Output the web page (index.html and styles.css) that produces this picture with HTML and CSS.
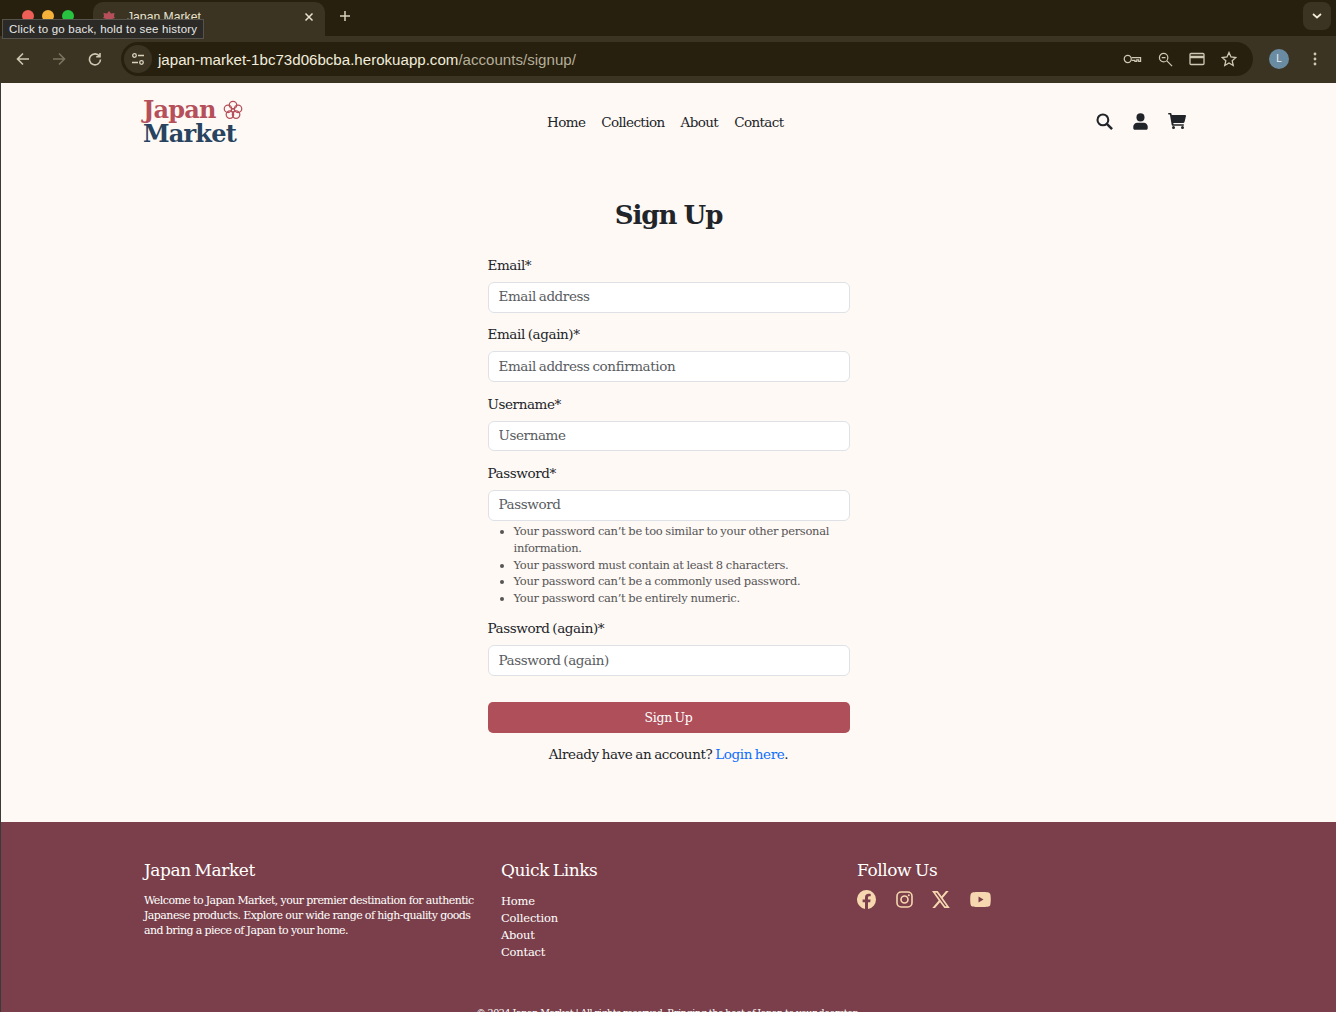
FILE: index.html
```html
<!DOCTYPE html>
<html>
<head>
  <title>Japan Market</title>
  <link rel="stylesheet" href="styles.css">
</head>
<body>
  <div class="browser">
    <div class="tabstrip">
      <div class="lights">
        <span class="light red"></span>
        <span class="light yellow"></span>
        <span class="light green"></span>
      </div>
      <div class="tab">
        <svg class="favicon" viewBox="0 0 14 14"><path fill="#b5505a" d="M7 1l2 2.500 3.500-.5-.5 3.500L13 8l-3 1-1 3.500-2-1.500-2 1.500L4 9 1 8l1-1.500L1.500 3 5 3.500z"/></svg>
        <span class="tab-title">Japan Market</span>
        <svg class="tab-close" viewBox="0 0 10 10"><path d="M1.500 1.500l7 7M8.500 1.500l-7 7"/></svg>
      </div>
      <svg class="new-tab" viewBox="0 0 12 12"><path d="M6 1v10M1 6h10"/></svg>
      <div class="tab-menu">
        <svg viewBox="0 0 10 6"><path d="M1 1l4 3.500L9 1"/></svg>
      </div>
    </div>
    <div class="toolbar">
      <svg class="nav-icon" viewBox="0 0 14 14"><path d="M13 7H2M7 1.500L1.500 7 7 12.500"/></svg>
      <svg class="nav-icon dim" viewBox="0 0 14 14"><path d="M1 7h11M7 1.500L12.500 7 7 12.500"/></svg>
      <svg class="nav-icon" viewBox="0 0 14 14"><path d="M11.500 4.200A5.500 5.500 0 1 0 12.500 7.500M12 1v3.800H8.200"/></svg>
      <div class="omnibox">
        <div class="site-info">
          <svg viewBox="0 0 14 14"><circle cx="3.500" cy="3.500" r="1.800"/><path d="M7 3.500h6M1 10.500h6"/><circle cx="10.500" cy="10.500" r="1.800"/></svg>
        </div>
        <span class="url">japan-market-1bc73d06bcba.herokuapp.com<span class="url-path">/accounts/signup/</span></span>
        <div class="omni-icons">
          <svg width="19" height="12" viewBox="0 0 20 12"><circle cx="5" cy="6" r="3.700"/><path d="M9 4.500h9.500v4h-2v-1.500h-2v1.500h-2V7.500H9"/></svg>
          <svg width="15" height="15" viewBox="0 0 16 16"><circle cx="6" cy="6" r="4.500"/><path d="M4 6h4M9.500 9.500L15 15"/></svg>
          <svg width="16" height="14" viewBox="0 0 16 14"><rect x="1" y="1.500" width="14" height="11" rx="1"/><path class="thick" d="M1 5h14"/></svg>
          <svg width="16" height="16" viewBox="0 0 16 16"><path d="M8 1.500l2 4.500 4.800.5-3.600 3.200 1 4.800L8 12l-4.200 2.500 1-4.800L1.200 6.500 6 6z"/></svg>
        </div>
      </div>
      <div class="avatar">L</div>
      <svg class="kebab" width="4" height="14" viewBox="0 0 4 14"><circle cx="2" cy="2" r="1.400"/><circle cx="2" cy="7" r="1.400"/><circle cx="2" cy="12" r="1.400"/></svg>
    </div>
    <div class="tooltip">Click to go back, hold to see history</div>
  </div>

  <div class="page">
    <header class="site-header">
      <a class="logo" href="#">
        <span class="logo-top">Japan
          <svg class="logo-flower" viewBox="0 0 24 24">
            <g fill="none" stroke="#b5505a" stroke-width="1.500">
              <circle cx="12" cy="6" r="4.500"/>
              <circle cx="18" cy="10.500" r="4.500"/>
              <circle cx="15.700" cy="17.500" r="4.500"/>
              <circle cx="8.300" cy="17.500" r="4.500"/>
              <circle cx="6" cy="10.500" r="4.500"/>
              <circle cx="12" cy="12.500" r="2.200"/>
            </g>
          </svg>
        </span>
        <span class="logo-bottom">Market</span>
      </a>
      <nav class="main-nav">
        <a href="#">Home</a>
        <a href="#">Collection</a>
        <a href="#">About</a>
        <a href="#">Contact</a>
      </nav>
      <div class="header-icons">
        <svg width="17" height="17" viewBox="0 0 18 18"><circle cx="7.300" cy="7.300" r="5.700" fill="none" stroke="#212529" stroke-width="2.200"/><path d="M11.500 11.500L17 17" stroke="#212529" stroke-width="2.600"/></svg>
        <svg width="15" height="17" viewBox="0 0 16 18"><circle cx="8" cy="4.600" r="4.300"/><path d="M4.500 10.200h7c2.300 0 4.200 1.900 4.200 4.200v1.800c0 .9-.7 1.600-1.600 1.600H1.900c-.9 0-1.600-.7-1.600-1.600v-1.800c0-2.300 1.900-4.200 4.200-4.200z"/></svg>
        <svg width="18" height="16" viewBox="0 0 18 16"><path d="M0 .8C0 .4.400 0 .8 0h1.800c.4 0 .8.300.9.700L3.700 2h13.500c.5 0 .9.500.8 1l-1.500 6.100c-.1.500-.5.800-1 .8H5.300l.3 1.400h10.200v1.400H4.500c-.4 0-.7-.3-.8-.6L1.900 1.400H.8C.4 1.400 0 1.200 0 .8z"/><circle cx="5.500" cy="14.500" r="1.500"/><circle cx="14.500" cy="14.500" r="1.500"/></svg>
      </div>
    </header>

    <main class="signup">
      <h1 class="signup-title">Sign Up</h1>
      <form class="signup-form">
        <div class="field">
          <label>Email*</label>
          <input type="text" placeholder="Email address">
        </div>
        <div class="field">
          <label>Email (again)*</label>
          <input type="text" placeholder="Email address confirmation">
        </div>
        <div class="field">
          <label>Username*</label>
          <input type="text" placeholder="Username">
        </div>
        <div class="field">
          <label>Password*</label>
          <input type="text" placeholder="Password">
          <ul class="help-list">
            <li>Your password can’t be too similar to your other personal information.</li>
            <li>Your password must contain at least 8 characters.</li>
            <li>Your password can’t be a commonly used password.</li>
            <li>Your password can’t be entirely numeric.</li>
          </ul>
        </div>
        <div class="field">
          <label>Password (again)*</label>
          <input type="text" placeholder="Password (again)">
        </div>
        <button class="submit" type="button">Sign Up</button>
      </form>
      <p class="login-note">Already have an account? <a href="#">Login here</a>.</p>
    </main>

    <footer class="site-footer">
      <div class="footer-cols">
        <div class="footer-col">
          <h5>Japan Market</h5>
          <p>Welcome to Japan Market, your premier destination for authentic Japanese products. Explore our wide range of high-quality goods and bring a piece of Japan to your home.</p>
        </div>
        <div class="footer-col">
          <h5>Quick Links</h5>
          <ul class="footer-links">
            <li>Home</li>
            <li>Collection</li>
            <li>About</li>
            <li>Contact</li>
          </ul>
        </div>
        <div class="footer-col">
          <h5>Follow Us</h5>
          <div class="socials">
            <svg width="19" height="19" viewBox="0 0 19 19"><path d="M19 9.500a9.500 9.500 0 1 0-11 9.400v-6.600H5.600V9.500H8V7.400c0-2.400 1.400-3.700 3.600-3.700 1 0 2.100.2 2.100.2v2.300h-1.200c-1.200 0-1.500.7-1.500 1.500v1.800h2.600l-.4 2.800H11v6.600a9.500 9.500 0 0 0 8-9.400z"/></svg>
            <svg class="insta" width="17" height="17" viewBox="0 0 17 17"><rect x="1" y="1" width="15" height="15" rx="4.200"/><circle cx="8.500" cy="8.500" r="3.500"/><circle class="dot" cx="12.800" cy="4.200" r="1"/></svg>
            <svg width="18" height="17" viewBox="0 0 18 17"><path fill-rule="evenodd" d="M14 0h2.700l-6 6.900L17.800 17h-5.500L8 11.200 3 17H.3l6.400-7.400L0 0h5.700l3.900 5.300zM13.100 15.200h1.500L4.800 1.700H3.200z"/></svg>
            <svg width="21" height="15" viewBox="0 0 21 15"><path fill-rule="evenodd" d="M18.500.500c.9.200 1.600.9 1.800 1.800.5 1.600.5 5.200.5 5.200s0 3.600-.5 5.200c-.2.900-.9 1.600-1.800 1.800-1.600.5-8 .5-8 .5s-6.400 0-8-.5c-.9-.2-1.600-.9-1.800-1.800C.2 11.100.2 7.500.2 7.500s0-3.600.5-5.200C.9 1.400 1.600.7 2.500.5 4.100 0 10.500 0 10.500 0s6.400 0 8 .5zM8.500 4.500v6l5-3z"/></svg>
          </div>
        </div>
      </div>
      <p class="copyright">© 2024 Japan Market | All rights reserved. Bringing the best of Japan to your doorstep.</p>
    </footer>
  </div>
</body>
</html>
```

FILE: styles.css
```css
html, body {
  height: 1012px;
  overflow: hidden;
}
body {
  margin: 0;
  font-family: "DejaVu Serif", serif;
  background-color: #fff9f5;
  color: #212529;
}
svg {
  display: block;
  flex: none;
}

/* browser chrome */
.browser {
  position: relative;
  font-family: "Liberation Sans", Arial, sans-serif;
}
.tabstrip {
  height: 36px;
  background-color: #27200f;
  display: flex;
  align-items: flex-end;
  padding-left: 22px;
}
.lights {
  display: flex;
  gap: 8px;
  align-self: flex-start;
  padding-top: 10px;
  margin-right: 19px;
}
.light {
  width: 12px;
  height: 12px;
  border-radius: 50%;
}
.red { background-color: #ed5f57; }
.yellow { background-color: #f5b13a; }
.green { background-color: #27c23f; }
.tab {
  width: 232px;
  height: 34px;
  box-sizing: border-box;
  background-color: #3b3422;
  border-radius: 10px 10px 0 0;
  display: flex;
  align-items: center;
  padding: 0 11px 4px 9px;
  gap: 11px;
  margin-right: 14px;
}
.favicon {
  width: 14px;
  height: 14px;
}
.tab-title {
  flex: 1;
  font-size: 12.200px;
  color: #e8e2d0;
}
.tab-close {
  width: 10px;
  height: 10px;
  fill: none;
  stroke: #e8e2d0;
  stroke-width: 1.500;
}
.new-tab {
  width: 12px;
  height: 12px;
  fill: none;
  stroke: #d9d2bd;
  stroke-width: 1.500;
  margin-bottom: 14px;
}
.tab-menu {
  width: 28px;
  height: 28px;
  background-color: #3b3422;
  border-radius: 8px;
  margin-left: auto;
  margin-right: 5px;
  margin-bottom: 6px;
  display: flex;
  align-items: center;
  justify-content: center;
}
.tab-menu svg {
  width: 10px;
  height: 6px;
  fill: none;
  stroke: #efe9d6;
  stroke-width: 1.700;
}
.toolbar {
  height: 47px;
  box-sizing: border-box;
  padding: 0 0 1px 16px;
  background-color: #3b3422;
  display: flex;
  align-items: center;
}
.nav-icon {
  width: 14px;
  height: 14px;
  fill: none;
  stroke: #cfc8b2;
  stroke-width: 1.600;
  margin-right: 22px;
}
.nav-icon.dim {
  stroke: #7b745f;
}
.nav-icon:nth-child(3) {
  margin-right: 19px;
}
.omnibox {
  width: 1132px;
  height: 34px;
  border-radius: 17px;
  background-color: #27200f;
  display: flex;
  align-items: center;
  padding-left: 3px;
  box-sizing: border-box;
}
.site-info {
  width: 28px;
  height: 28px;
  border-radius: 50%;
  background-color: #3b3422;
  display: flex;
  align-items: center;
  justify-content: center;
  margin-right: 6px;
}
.site-info svg {
  width: 14px;
  height: 14px;
  fill: none;
  stroke: #d9d2bd;
  stroke-width: 1.300;
}
.url {
  font-size: 15.100px;
  color: #f1ecdc;
}
.url-path {
  color: #b5ae99;
}
.omni-icons {
  margin-left: auto;
  display: flex;
  align-items: center;
  gap: 16px;
  padding-right: 16px;
}
.omni-icons svg {
  fill: none;
  stroke: #cfc8b2;
  stroke-width: 1.300;
}
.omni-icons .thick {
  stroke-width: 2.500;
}
.avatar {
  width: 20px;
  height: 20px;
  border-radius: 50%;
  background-color: #6a8ca3;
  color: #f0f0f0;
  font-size: 10px;
  text-align: center;
  line-height: 20px;
  margin-left: 16px;
}
.kebab {
  fill: #cfc8b2;
  margin-left: 24px;
}
.tooltip {
  position: absolute;
  left: 2px;
  top: 19px;
  height: 18px;
  line-height: 18px;
  padding: 0 6px;
  font-size: 11.500px;
  letter-spacing: 0.200px;
  color: #e8e8e8;
  background-color: #2b2a26;
  border: 1px solid #55534c;
}

/* header */
.page {
  border-left: 1px solid #3a3a3a;
}
.site-header {
  height: 79px;
  box-sizing: border-box;
  padding-bottom: 1px;
  width: 1043px;
  margin-left: 142px;
  display: flex;
  align-items: center;
}
.logo {
  width: 404px;
  text-decoration: none;
  font-weight: bold;
  line-height: 24px;
  font-size: 24px;
  letter-spacing: -0.800px;
  display: block;
}
.logo-top {
  color: #b5505a;
  display: flex;
  align-items: center;
  gap: 7px;
}
.logo-flower {
  width: 20px;
  height: 20px;
}
.logo-bottom {
  color: #27435f;
  display: block;
}
.main-nav {
  display: flex;
  gap: 16px;
  font-size: 13.500px;
  letter-spacing: -0.600px;
}
.main-nav a {
  color: #212529;
  text-decoration: none;
}
.header-icons {
  margin-left: auto;
  margin-bottom: 2px;
  display: flex;
  align-items: center;
  gap: 20px;
  fill: #212529;
}

/* sign up form */
.signup {
  width: 362px;
  margin: 0 auto;
  padding-top: 34px;
  height: 660px;
  box-sizing: border-box;
  font-size: 13.500px;
  letter-spacing: -0.400px;
  word-spacing: -1px;
}
.signup-title {
  margin: 0 0 20px;
  text-align: center;
  font-size: 26px;
  line-height: 38px;
  font-weight: bold;
  letter-spacing: -1px;
}
.field {
  margin-bottom: 10.670px;
}
.field label {
  display: block;
  line-height: 22px;
  margin-bottom: 6px;
}
.field input {
  display: block;
  width: 100%;
  height: 30.670px;
  box-sizing: border-box;
  border: 1px solid #dee2e6;
  border-radius: 6px;
  background-color: #fff;
  padding: 0 10px 2px;
  font: 13.500px "DejaVu Serif", serif;
  letter-spacing: -0.400px;
  word-spacing: -1px;
}
.field input::placeholder {
  color: #595c5f;
}
.help-list {
  margin: 2.500px 0 0;
  padding-left: 26px;
  font-size: 11.500px;
  line-height: 16.700px;
  letter-spacing: -0.300px;
  word-spacing: -0.400px;
  color: #555;
}
.submit {
  display: block;
  width: 100%;
  height: 31px;
  margin-top: 26px;
  border: none;
  border-radius: 5px;
  background-color: #ae4f5a;
  color: #fff;
  font: 12.500px "DejaVu Serif", serif;
  letter-spacing: -0.300px;
  word-spacing: -1px;
}
.login-note {
  margin: 10px 0 0;
  text-align: center;
  line-height: 22px;
}
.login-note a {
  color: #0d6efd;
  text-decoration: none;
}

/* footer */
.site-footer {
  background-color: #7a3f4a;
  color: #fff;
  height: 200px;
  padding: 36px 0 0 143px;
  box-sizing: border-box;
}
.footer-cols {
  display: grid;
  grid-template-columns: 357px 356px 340px;
}
.footer-col h5 {
  margin: 0 0 11px;
  font-size: 17px;
  line-height: 24px;
  font-weight: normal;
  letter-spacing: -0.450px;
  word-spacing: -1px;
}
.footer-col p {
  margin: 0;
  width: 335px;
  font-size: 11px;
  line-height: 15px;
  letter-spacing: -0.550px;
  word-spacing: -0.200px;
}
.footer-links {
  list-style: none;
  margin: 0;
  padding: 0;
  font-size: 11.500px;
  line-height: 17px;
  letter-spacing: -0.200px;
}
.socials {
  display: flex;
  align-items: center;
  gap: 19.500px;
  margin-top: -3px;
  fill: #f6d7b0;
}
.insta {
  fill: none;
  stroke: #f6d7b0;
  stroke-width: 1.600;
}
.insta .dot {
  fill: #f6d7b0;
  stroke: none;
}
.copyright {
  margin: 46px 0 0;
  text-align: center;
  font-size: 9.500px;
  letter-spacing: -0.350px;
  word-spacing: -0.500px;
  padding-right: 143px;
}
```
